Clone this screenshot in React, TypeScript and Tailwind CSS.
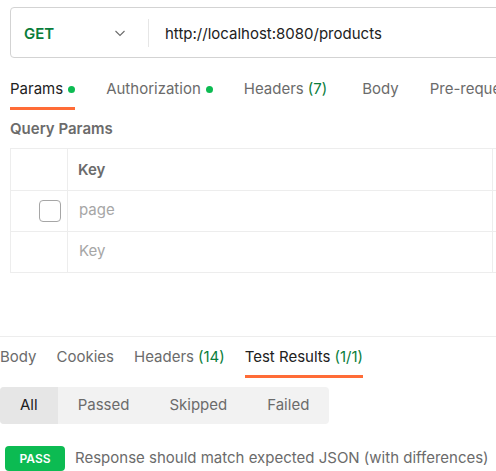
import React from 'react';

const topTabs = [
  { label: 'Params', dot: true, active: true },
  { label: 'Authorization', dot: true },
  { label: 'Headers', count: '(7)', extra: true },
  { label: 'Body' },
  { label: 'Pre-request Script' },
];

const bottomTabs = [
  { label: 'Body' },
  { label: 'Cookies' },
  { label: 'Headers', count: '(14)' },
  { label: 'Test Results', count: '(1/1)', active: true },
];

const filters = ['All', 'Passed', 'Skipped', 'Failed'];

export default function App() {
  return (
    <div
      className="w-[496px] h-[471px] overflow-hidden bg-white text-[15px] text-[#6b6b6b]"
      style={{ fontFamily: 'Inter, "Noto Sans", sans-serif' }}
    >
      {/* URL bar */}
      <div className="pl-[10px] pt-[7px]">
        <div className="flex items-center h-[51px] w-[520px] border border-[#d3d3d3] rounded-[4px]">
          <div className="flex items-center w-[137px] pl-[13px] pr-[22px] pt-[3px]">
            <span className="font-semibold text-[#0a7d3b] text-[15px]">GET</span>
            <svg className="ml-auto -mt-[2px]" width="12" height="12" viewBox="0 0 12 12" fill="none">
              <path d="M1.5 4L6 8.5L10.5 4" stroke="#6b6b6b" strokeWidth="1.1" />
            </svg>
          </div>
          <div className="w-px h-[28px] bg-[#e6e6e6]" />
          <span className="ml-[16px] pt-[3px] text-[#212121] whitespace-nowrap">http://localhost:8080/products</span>
        </div>
      </div>

      {/* request tabs */}
      <div className="flex pl-[10px] mt-[19px] whitespace-nowrap">
        {topTabs.map((t, i) => (
          <div key={t.label} className={`flex flex-col ${i > 0 ? 'ml-[31px]' : ''} ${t.extra ? 'mr-[4px]' : ''}`}>
            <div className="flex items-center h-[24px]">
              <span className={t.active ? 'text-[#212121]' : 'text-[#6b6b6b]'}>{t.label}</span>
              {t.count && <span className="ml-[4px] text-[#0a7d3b]">{t.count}</span>}
              {t.dot && <span className="ml-[5px] w-[7px] h-[7px] rounded-full bg-[#0cbb52]" />}
            </div>
            <div className={`mt-[6px] h-[3px] ${t.active ? 'bg-[#ff6c37]' : 'bg-transparent'}`} />
          </div>
        ))}
      </div>

      <div className="pl-[10px] mt-[9px] font-semibold text-[#6b6b6b] h-[20px] leading-[20px]">Query Params</div>

      {/* params table */}
      <div className="ml-[10px] mt-[9px] w-[500px] border-t border-l border-[#ededed]">
        <div className="grid grid-cols-[57px_425px_18px] h-[42px] border-b border-[#ededed]">
          <div className="border-r border-[#ededed]" />
          <div className="border-r border-[#ededed] flex items-center pl-[10px] pt-[1px] font-semibold text-[#6b6b6b]">Key</div>
          <div />
        </div>
        <div className="grid grid-cols-[57px_425px_18px] h-[41px] border-b border-[#ededed]">
          <div className="border-r border-[#ededed] flex items-center justify-end pr-[6px]">
            <div className="w-[22px] h-[22px] border border-[#a6a6a6] rounded-[4px]" />
          </div>
          <div className="border-r border-[#ededed] flex items-center pl-[11px] pb-[2px] text-[#a6a6a6]">page</div>
          <div />
        </div>
        <div className="grid grid-cols-[57px_425px_18px] h-[41px] border-b border-[#ededed]">
          <div className="border-r border-[#ededed]" />
          <div className="border-r border-[#ededed] flex items-center pl-[11px] pb-[2px] text-[#a6a6a6]">Key</div>
          <div />
        </div>
      </div>

      {/* response */}
      <div className="mt-[63px] border-t border-[#ededed]" />
      <div className="flex mt-[8px] whitespace-nowrap gap-[20px]">
        {bottomTabs.map(t => (
          <div key={t.label} className="flex flex-col">
            <div className="flex items-center h-[24px]">
              <span className={t.active ? 'text-[#212121]' : 'text-[#6b6b6b]'}>{t.label}</span>
              {t.count && <span className="ml-[4px] text-[#0a7d3b]">{t.count}</span>}
            </div>
            <div className={`mt-[6px] h-[3px] ${t.active ? 'bg-[#ff6c37]' : 'bg-transparent'}`} />
          </div>
        ))}
      </div>

      <div className="mt-[9px] inline-flex h-[37px] rounded-[4px] bg-[#f2f2f2] overflow-hidden">
        {filters.map((f, i) => (
          <div
            key={f}
            className={`flex items-center px-[20px] ${i === 0 ? 'bg-[#e6e6e6] text-[#212121]' : 'text-[#6b6b6b]'}`}
          >
            {f}
          </div>
        ))}
      </div>

      <div className="flex items-center mt-[22px] pl-[5px] whitespace-nowrap">
        <span className="flex items-center justify-center w-[60px] h-[25px] rounded-[4px] bg-[#0cbb52] text-white text-[12px] font-semibold">PASS</span>
        <span className="ml-[10px] text-[#6b6b6b]">Response should match expected JSON (with differences)</span>
      </div>
    </div>
  );
}
